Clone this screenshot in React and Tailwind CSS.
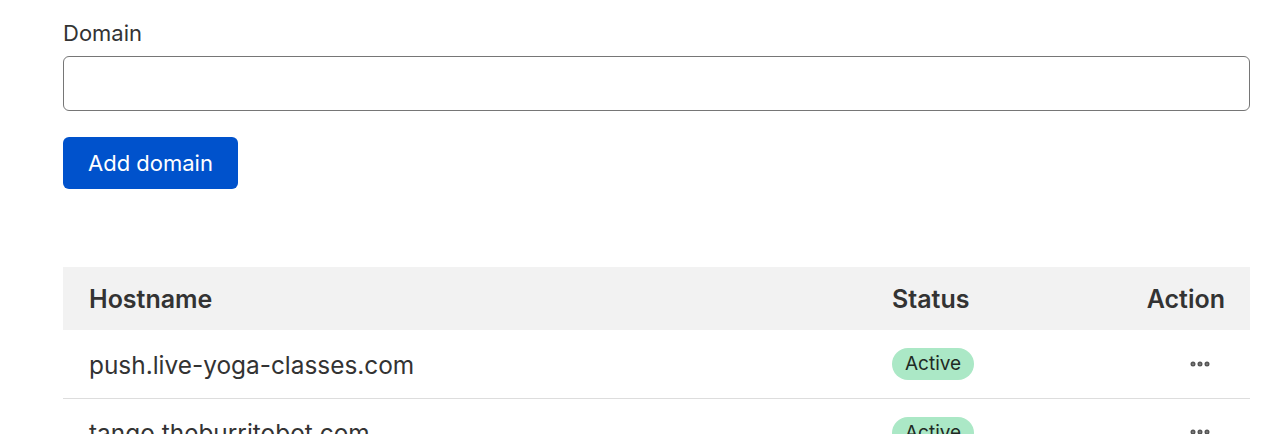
import { MoreHorizontal } from 'lucide-react';

const rows = [
  { host: 'push.live-yoga-classes.com', status: 'Active' },
  { host: 'tango.theburritobot.com', status: 'Active' },
];

export default function App() {
  return (
    <div className="min-h-screen bg-white text-[#333] pl-[63px] pr-[26px] pt-[20px]" style={{ fontFamily: 'Inter, "Noto Sans", sans-serif' }}>
      <label className="block text-[22px] leading-[26px] mb-[10px]">Domain</label>
      <input className="block w-full h-[55px] rounded-[6px] border border-[#767676] px-3 text-[20px] outline-none" />
      <button className="mt-[26px] h-[52px] px-[25px] rounded-[6px] bg-[#0052cc] text-white text-[22px]">Add domain</button>

      <table className="w-full mt-[78px] border-collapse table-fixed">
        <thead>
          <tr className="bg-[#f2f2f2] h-[63px]">
            <th className="text-left font-semibold text-[25px] pl-[26px] pt-[2px]">Hostname</th>
            <th className="text-left font-semibold text-[25px] w-[208px] pt-[2px]">Status</th>
            <th className="text-right font-semibold text-[25px] pr-[25px] w-[150px] pt-[2px]">Action</th>
          </tr>
        </thead>
        <tbody>
          {rows.map(r => (
            <tr key={r.host} className="h-[68px] border-b border-[#dddddd]">
              <td className="text-[24.4px] pl-[26px] pt-[3px]">{r.host}</td>
              <td className="pt-[1px]">
                <span className="inline-block rounded-full bg-[#abe8c6] px-[13px] py-[4px] text-[19px] leading-[24px] text-[#1f2a24]">{r.status}</span>
              </td>
              <td className="pr-[38px]">
                <div className="flex justify-end">
                  <MoreHorizontal className="w-6 h-6 text-[#555]" strokeWidth={3} />
                </div>
              </td>
            </tr>
          ))}
        </tbody>
      </table>
    </div>
  );
}
